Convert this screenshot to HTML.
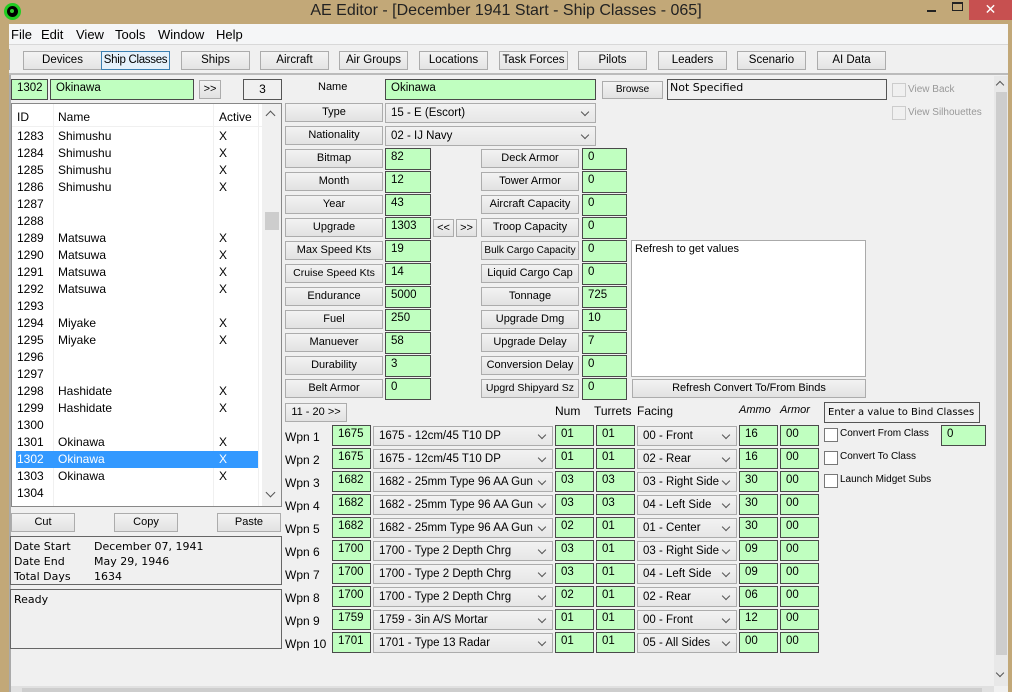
<!DOCTYPE html>
<html><head><meta charset="utf-8"><style>
*{box-sizing:border-box;margin:0;padding:0}
body{width:1012px;height:692px;overflow:hidden;background:#f0f0f0;font-family:"Liberation Sans",sans-serif;font-size:12px;color:#000;position:relative}
div,span{position:absolute}
.g{background:#c0ffc0;border:1px solid #4a4a4a;padding-left:5px;line-height:16px;font-size:11.5px;white-space:nowrap}
.b{background:linear-gradient(#f3f3f3,#e2e2e2);border:1px solid #acacac;text-align:center;font-size:11px;white-space:nowrap}
.tb{background:linear-gradient(#f3f3f3,#e4e4e4);border:1px solid #acacac;text-align:center;font-size:11.5px;height:19px;line-height:17px;top:51px;width:69px;white-space:nowrap}
.s{background:linear-gradient(#f2f2f2,#e6e6e6);border:1px solid #acacac;padding-left:5px;font-size:11.5px;line-height:18px;white-space:nowrap}
.s:after{content:"";position:absolute;right:7px;top:5px;width:5px;height:5px;border-right:1.5px solid #555;border-bottom:1.5px solid #555;transform:rotate(45deg)}
.l{font-size:12px;white-space:nowrap}
.cb{width:14px;height:14px;border:1px solid #777;background:#fff}
</style></head><body>
<div style="left:0;top:0;width:1012px;height:24px;background:#c2a878"></div>
<div style="left:0;top:0;width:9px;height:692px;background:#c2a878"></div>
<div style="left:1008px;top:0;width:4px;height:692px;background:#c2a878"></div>
<div style="left:4px;top:3px;width:17px;height:17px;border-radius:50%;background:#000;border:3px solid #22cc22"></div>
<div style="left:10px;top:9px;width:4px;height:4px;border-radius:50%;background:#3c3"></div>
<div style="left:0;top:2px;width:1012px;text-align:center;font-size:16px;color:#222">AE Editor - [December 1941 Start - Ship Classes - 065]</div>
<div style="left:927px;top:10px;width:9px;height:2px;background:#222"></div>
<div style="left:952px;top:2px;width:11px;height:9px;border:1.5px solid #222;border-top-width:2px"></div>
<div style="left:969px;top:0;width:43px;height:20px;background:#c75050;color:#fff;text-align:center;font-size:14px;line-height:19px">✕</div>
<div style="left:9px;top:24px;width:999px;height:21px;background:#f5f6f7;border-bottom:1px solid #d8d8d8"></div>
<div class="l" style="left:11px;top:27px;font-size:13px">File</div>
<div class="l" style="left:41px;top:27px;font-size:13px">Edit</div>
<div class="l" style="left:76px;top:27px;font-size:13px">View</div>
<div class="l" style="left:115px;top:27px;font-size:13px">Tools</div>
<div class="l" style="left:158px;top:27px;font-size:13px">Window</div>
<div class="l" style="left:216px;top:27px;font-size:13px">Help</div>
<div style="left:9px;top:49px;width:1px;height:21px;background:#aaa"></div>
<div class="tb" style="left:23px;width:79px">Devices</div>
<div class="tb" style="left:101px;width:69px;border-color:#3c7fb1;background:#e5f1fb;letter-spacing:-0.3px">Ship Classes</div>
<div class="tb" style="left:181px">Ships</div>
<div class="tb" style="left:260px">Aircraft</div>
<div class="tb" style="left:339px">Air Groups</div>
<div class="tb" style="left:419px">Locations</div>
<div class="tb" style="left:499px">Task Forces</div>
<div class="tb" style="left:578px">Pilots</div>
<div class="tb" style="left:658px">Leaders</div>
<div class="tb" style="left:737px">Scenario</div>
<div class="tb" style="left:817px">AI Data</div>
<div style="left:9px;top:73px;width:999px;height:2px;background:#bbb"></div>
<div style="left:9px;top:75px;width:2px;height:617px;background:#aaa"></div>
<div class="g" style="left:11px;top:79px;width:37px;height:21px">1302</div>
<div class="g" style="left:50px;top:79px;width:144px;height:21px">Okinawa</div>
<div class="b" style="left:199px;top:80px;width:22px;height:19px;line-height:17px">&gt;&gt;</div>
<div style="left:243px;top:79px;width:39px;height:21px;border:1px solid #555;text-align:center;line-height:19px">3</div>
<div style="left:11px;top:103px;width:271px;height:404px;background:#fff;border:1px solid #888;overflow:hidden">
 <div style="left:41px;top:0;width:1px;height:404px;background:#f0f0f0"></div>
 <div style="left:201px;top:0;width:1px;height:404px;background:#f0f0f0"></div>
 <div style="left:246px;top:0;width:1px;height:404px;background:#f0f0f0"></div>
 <div style="left:5px;top:6px">ID</div><div style="left:46px;top:6px">Name</div><div style="left:207px;top:6px">Active</div>
 <div style="left:0;top:22px;width:250px;height:1px;background:#f0f0f0"></div>
 <div style="left:250px;top:0;width:19px;height:402px;background:#f0f0f0"></div>
 <div style="left:253px;top:108px;width:14px;height:18px;background:#cdcdcd"></div>
 <div style="left:255px;top:8px;width:7px;height:7px;border-left:1.5px solid #555;border-top:1.5px solid #555;transform:rotate(45deg)"></div>
 <div style="left:255px;top:385px;width:7px;height:7px;border-right:1.5px solid #555;border-bottom:1.5px solid #555;transform:rotate(45deg)"></div>
</div>
<div style="left:16px;top:451px;width:242px;height:17px;background:#3399ff"></div>
<div style="left:17px;top:128px;line-height:17px">1283<br>1284<br>1285<br>1286<br>1287<br>1288<br>1289<br>1290<br>1291<br>1292<br>1293<br>1294<br>1295<br>1296<br>1297<br>1298<br>1299<br>1300<br>1301<br><span style="position:static;color:#fff">1302</span><br>1303<br>1304</div>
<div style="left:58px;top:128px;line-height:17px">Shimushu<br>Shimushu<br>Shimushu<br>Shimushu<br>&nbsp;<br>&nbsp;<br>Matsuwa<br>Matsuwa<br>Matsuwa<br>Matsuwa<br>&nbsp;<br>Miyake<br>Miyake<br>&nbsp;<br>&nbsp;<br>Hashidate<br>Hashidate<br>&nbsp;<br>Okinawa<br><span style="position:static;color:#fff">Okinawa</span><br>Okinawa<br>&nbsp;</div>
<div style="left:219px;top:128px;line-height:17px">X<br>X<br>X<br>X<br>&nbsp;<br>&nbsp;<br>X<br>X<br>X<br>X<br>&nbsp;<br>X<br>X<br>&nbsp;<br>&nbsp;<br>X<br>X<br>&nbsp;<br>X<br><span style="position:static;color:#fff">X</span><br>X<br>&nbsp;</div>
<div class="b" style="left:11px;top:513px;width:64px;height:19px;line-height:17px">Cut</div>
<div class="b" style="left:114px;top:513px;width:64px;height:19px;line-height:17px">Copy</div>
<div class="b" style="left:217px;top:513px;width:64px;height:19px;line-height:17px">Paste</div>
<div style="left:10px;top:536px;width:272px;height:49px;border:1px solid #666;font-family:'DejaVu Sans',sans-serif;font-size:11px;line-height:15px">
 <div style="left:3px;top:2px">Date Start<br>Date End<br>Total Days</div>
 <div style="left:83px;top:2px">December 07, 1941<br>May 29, 1946<br>1634</div>
</div>
<div style="left:10px;top:589px;width:272px;height:60px;border:1px solid #666;font-family:'DejaVu Sans',sans-serif;font-size:11px"><div style="left:3px;top:3px">Ready</div></div>
<div class="l" style="left:318px;top:81px;font-size:11px">Name</div>
<div class="g" style="left:385px;top:79px;width:211px;height:21px">Okinawa</div>
<div class="b" style="left:602px;top:81px;width:61px;height:18px;line-height:16px;font-size:10px">Browse</div>
<div style="left:667px;top:79px;width:220px;height:21px;border:1px solid #555;padding-left:2px;font-family:'DejaVu Sans',sans-serif;font-size:11px;line-height:16px">Not Specified</div>
<div class="cb" style="left:892px;top:83px;border-color:#ccc;background:#f0f0f0"></div><div class="l" style="left:908px;top:84px;font-size:10px;color:#999">View Back</div>
<div class="cb" style="left:892px;top:106px;border-color:#ccc;background:#f0f0f0"></div><div class="l" style="left:908px;top:107px;font-size:10px;color:#999">View Silhouettes</div>
<div class="s" style="left:385px;top:103px;width:211px;height:20px">15 - E (Escort)</div>
<div class="s" style="left:385px;top:126px;width:211px;height:20px">02 - IJ Navy</div>
<div class="b" style="left:285px;top:103px;width:98px;height:19px;line-height:17px">Type</div>
<div class="b" style="left:285px;top:126px;width:98px;height:19px;line-height:17px">Nationality</div>
<div class="b" style="left:285px;top:149px;width:98px;height:19px;line-height:17px">Bitmap</div>
<div class="b" style="left:285px;top:172px;width:98px;height:19px;line-height:17px">Month</div>
<div class="b" style="left:285px;top:195px;width:98px;height:19px;line-height:17px">Year</div>
<div class="b" style="left:285px;top:218px;width:98px;height:19px;line-height:17px">Upgrade</div>
<div class="b" style="left:285px;top:241px;width:98px;height:19px;line-height:17px">Max Speed Kts</div>
<div class="b" style="left:285px;top:264px;width:98px;height:19px;line-height:17px;font-size:10.5px">Cruise Speed Kts</div>
<div class="b" style="left:285px;top:287px;width:98px;height:19px;line-height:17px">Endurance</div>
<div class="b" style="left:285px;top:310px;width:98px;height:19px;line-height:17px">Fuel</div>
<div class="b" style="left:285px;top:333px;width:98px;height:19px;line-height:17px">Manuever</div>
<div class="b" style="left:285px;top:356px;width:98px;height:19px;line-height:17px">Durability</div>
<div class="b" style="left:285px;top:379px;width:98px;height:19px;line-height:17px">Belt Armor</div>
<div class="g" style="left:385px;top:148px;width:46px;height:22px">82</div>
<div class="g" style="left:385px;top:171px;width:46px;height:22px">12</div>
<div class="g" style="left:385px;top:194px;width:46px;height:22px">43</div>
<div class="g" style="left:385px;top:217px;width:46px;height:22px">1303</div>
<div class="g" style="left:385px;top:240px;width:46px;height:22px">19</div>
<div class="g" style="left:385px;top:263px;width:46px;height:22px">14</div>
<div class="g" style="left:385px;top:286px;width:46px;height:22px">5000</div>
<div class="g" style="left:385px;top:309px;width:46px;height:22px">250</div>
<div class="g" style="left:385px;top:332px;width:46px;height:22px">58</div>
<div class="g" style="left:385px;top:355px;width:46px;height:22px">3</div>
<div class="g" style="left:385px;top:378px;width:46px;height:22px">0</div>
<div class="b" style="left:433px;top:219px;width:21px;height:18px;line-height:16px">&lt;&lt;</div>
<div class="b" style="left:456px;top:219px;width:21px;height:18px;line-height:16px">&gt;&gt;</div>
<div class="b" style="left:481px;top:149px;width:98px;height:19px;line-height:17px">Deck Armor</div>
<div class="b" style="left:481px;top:172px;width:98px;height:19px;line-height:17px">Tower Armor</div>
<div class="b" style="left:481px;top:195px;width:98px;height:19px;line-height:17px">Aircraft Capacity</div>
<div class="b" style="left:481px;top:218px;width:98px;height:19px;line-height:17px">Troop Capacity</div>
<div class="b" style="left:481px;top:241px;width:98px;height:19px;line-height:17px;font-size:10px">Bulk Cargo Capacity</div>
<div class="b" style="left:481px;top:264px;width:98px;height:19px;line-height:17px">Liquid Cargo Cap</div>
<div class="b" style="left:481px;top:287px;width:98px;height:19px;line-height:17px">Tonnage</div>
<div class="b" style="left:481px;top:310px;width:98px;height:19px;line-height:17px">Upgrade Dmg</div>
<div class="b" style="left:481px;top:333px;width:98px;height:19px;line-height:17px">Upgrade Delay</div>
<div class="b" style="left:481px;top:356px;width:98px;height:19px;line-height:17px">Conversion Delay</div>
<div class="b" style="left:481px;top:379px;width:98px;height:19px;line-height:17px;font-size:10.5px">Upgrd Shipyard Sz</div>
<div class="g" style="left:582px;top:148px;width:45px;height:22px">0</div>
<div class="g" style="left:582px;top:171px;width:45px;height:22px">0</div>
<div class="g" style="left:582px;top:194px;width:45px;height:22px">0</div>
<div class="g" style="left:582px;top:217px;width:45px;height:22px">0</div>
<div class="g" style="left:582px;top:240px;width:45px;height:22px">0</div>
<div class="g" style="left:582px;top:263px;width:45px;height:22px">0</div>
<div class="g" style="left:582px;top:286px;width:45px;height:22px">725</div>
<div class="g" style="left:582px;top:309px;width:45px;height:22px">10</div>
<div class="g" style="left:582px;top:332px;width:45px;height:22px">7</div>
<div class="g" style="left:582px;top:355px;width:45px;height:22px">0</div>
<div class="g" style="left:582px;top:378px;width:45px;height:22px">0</div>
<div style="left:631px;top:240px;width:235px;height:137px;background:#fff;border:1px solid #aaa;padding:2px 3px;font-size:11px">Refresh to get values</div>
<div class="b" style="left:632px;top:379px;width:234px;height:19px;line-height:17px">Refresh Convert To/From Binds</div>
<div class="b" style="left:285px;top:403px;width:62px;height:19px;line-height:17px">11 - 20 &gt;&gt;</div>
<div class="l" style="left:555px;top:404px">Num</div>
<div class="l" style="left:594px;top:404px">Turrets</div>
<div class="l" style="left:637px;top:404px">Facing</div>
<div class="l" style="left:739px;top:404px;font-style:italic;font-size:11px">Ammo</div>
<div class="l" style="left:780px;top:404px;font-style:italic;font-size:11px">Armor</div>
<div style="left:824px;top:402px;width:156px;height:21px;border:1px solid #555;font-family:'DejaVu Sans',sans-serif;font-size:10px;line-height:19px;padding-left:3px;white-space:nowrap;overflow:hidden">Enter a value to Bind Classes</div>
<div class="cb" style="left:824px;top:428px"></div><div class="l" style="left:840px;top:428px;font-size:10px">Convert From Class</div>
<div class="g" style="left:941px;top:425px;width:45px;height:21px">0</div>
<div class="cb" style="left:824px;top:451px"></div><div class="l" style="left:840px;top:451px;font-size:10px">Convert To Class</div>
<div class="cb" style="left:824px;top:474px"></div><div class="l" style="left:840px;top:474px;font-size:10px">Launch Midget Subs</div>

<div class="l" style="left:285px;top:430px">Wpn 1</div>
<div class="g" style="left:332px;top:425px;width:39px;height:21px">1675</div><div class="s" style="left:373px;top:426px;width:180px;height:20px">1675 - 12cm/45 T10 DP</div><div class="g" style="left:555px;top:425px;width:39px;height:21px">01</div><div class="g" style="left:596px;top:425px;width:39px;height:21px">01</div><div class="s" style="left:637px;top:426px;width:100px;height:20px">00 - Front</div><div class="g" style="left:739px;top:425px;width:39px;height:21px">16</div><div class="g" style="left:780px;top:425px;width:39px;height:21px">00</div>
<div class="l" style="left:285px;top:453px">Wpn 2</div>
<div class="g" style="left:332px;top:448px;width:39px;height:21px">1675</div><div class="s" style="left:373px;top:449px;width:180px;height:20px">1675 - 12cm/45 T10 DP</div><div class="g" style="left:555px;top:448px;width:39px;height:21px">01</div><div class="g" style="left:596px;top:448px;width:39px;height:21px">01</div><div class="s" style="left:637px;top:449px;width:100px;height:20px">02 - Rear</div><div class="g" style="left:739px;top:448px;width:39px;height:21px">16</div><div class="g" style="left:780px;top:448px;width:39px;height:21px">00</div>
<div class="l" style="left:285px;top:476px">Wpn 3</div>
<div class="g" style="left:332px;top:471px;width:39px;height:21px">1682</div><div class="s" style="left:373px;top:472px;width:180px;height:20px">1682 - 25mm Type 96 AA Gun</div><div class="g" style="left:555px;top:471px;width:39px;height:21px">03</div><div class="g" style="left:596px;top:471px;width:39px;height:21px">03</div><div class="s" style="left:637px;top:472px;width:100px;height:20px">03 - Right Side</div><div class="g" style="left:739px;top:471px;width:39px;height:21px">30</div><div class="g" style="left:780px;top:471px;width:39px;height:21px">00</div>
<div class="l" style="left:285px;top:499px">Wpn 4</div>
<div class="g" style="left:332px;top:494px;width:39px;height:21px">1682</div><div class="s" style="left:373px;top:495px;width:180px;height:20px">1682 - 25mm Type 96 AA Gun</div><div class="g" style="left:555px;top:494px;width:39px;height:21px">03</div><div class="g" style="left:596px;top:494px;width:39px;height:21px">03</div><div class="s" style="left:637px;top:495px;width:100px;height:20px">04 - Left Side</div><div class="g" style="left:739px;top:494px;width:39px;height:21px">30</div><div class="g" style="left:780px;top:494px;width:39px;height:21px">00</div>
<div class="l" style="left:285px;top:522px">Wpn 5</div>
<div class="g" style="left:332px;top:517px;width:39px;height:21px">1682</div><div class="s" style="left:373px;top:518px;width:180px;height:20px">1682 - 25mm Type 96 AA Gun</div><div class="g" style="left:555px;top:517px;width:39px;height:21px">02</div><div class="g" style="left:596px;top:517px;width:39px;height:21px">01</div><div class="s" style="left:637px;top:518px;width:100px;height:20px">01 - Center</div><div class="g" style="left:739px;top:517px;width:39px;height:21px">30</div><div class="g" style="left:780px;top:517px;width:39px;height:21px">00</div>
<div class="l" style="left:285px;top:545px">Wpn 6</div>
<div class="g" style="left:332px;top:540px;width:39px;height:21px">1700</div><div class="s" style="left:373px;top:541px;width:180px;height:20px">1700 - Type 2 Depth Chrg</div><div class="g" style="left:555px;top:540px;width:39px;height:21px">03</div><div class="g" style="left:596px;top:540px;width:39px;height:21px">01</div><div class="s" style="left:637px;top:541px;width:100px;height:20px">03 - Right Side</div><div class="g" style="left:739px;top:540px;width:39px;height:21px">09</div><div class="g" style="left:780px;top:540px;width:39px;height:21px">00</div>
<div class="l" style="left:285px;top:568px">Wpn 7</div>
<div class="g" style="left:332px;top:563px;width:39px;height:21px">1700</div><div class="s" style="left:373px;top:564px;width:180px;height:20px">1700 - Type 2 Depth Chrg</div><div class="g" style="left:555px;top:563px;width:39px;height:21px">03</div><div class="g" style="left:596px;top:563px;width:39px;height:21px">01</div><div class="s" style="left:637px;top:564px;width:100px;height:20px">04 - Left Side</div><div class="g" style="left:739px;top:563px;width:39px;height:21px">09</div><div class="g" style="left:780px;top:563px;width:39px;height:21px">00</div>
<div class="l" style="left:285px;top:591px">Wpn 8</div>
<div class="g" style="left:332px;top:586px;width:39px;height:21px">1700</div><div class="s" style="left:373px;top:587px;width:180px;height:20px">1700 - Type 2 Depth Chrg</div><div class="g" style="left:555px;top:586px;width:39px;height:21px">02</div><div class="g" style="left:596px;top:586px;width:39px;height:21px">01</div><div class="s" style="left:637px;top:587px;width:100px;height:20px">02 - Rear</div><div class="g" style="left:739px;top:586px;width:39px;height:21px">06</div><div class="g" style="left:780px;top:586px;width:39px;height:21px">00</div>
<div class="l" style="left:285px;top:614px">Wpn 9</div>
<div class="g" style="left:332px;top:609px;width:39px;height:21px">1759</div><div class="s" style="left:373px;top:610px;width:180px;height:20px">1759 - 3in A/S Mortar</div><div class="g" style="left:555px;top:609px;width:39px;height:21px">01</div><div class="g" style="left:596px;top:609px;width:39px;height:21px">01</div><div class="s" style="left:637px;top:610px;width:100px;height:20px">00 - Front</div><div class="g" style="left:739px;top:609px;width:39px;height:21px">12</div><div class="g" style="left:780px;top:609px;width:39px;height:21px">00</div>
<div class="l" style="left:285px;top:637px">Wpn 10</div>
<div class="g" style="left:332px;top:632px;width:39px;height:21px">1701</div><div class="s" style="left:373px;top:633px;width:180px;height:20px">1701 - Type 13 Radar</div><div class="g" style="left:555px;top:632px;width:39px;height:21px">01</div><div class="g" style="left:596px;top:632px;width:39px;height:21px">01</div><div class="s" style="left:637px;top:633px;width:100px;height:20px">05 - All Sides</div><div class="g" style="left:739px;top:632px;width:39px;height:21px">00</div><div class="g" style="left:780px;top:632px;width:39px;height:21px">00</div>

<div style="left:994px;top:76px;width:14px;height:610px;background:#e8e8e8"></div>
<div style="left:996px;top:92px;width:11px;height:563px;background:#cdcdcd"></div>
<div style="left:997px;top:82px;width:6px;height:6px;border-left:1.5px solid #555;border-top:1.5px solid #555;transform:rotate(45deg)"></div>
<div style="left:997px;top:670px;width:6px;height:6px;border-right:1.5px solid #555;border-bottom:1.5px solid #555;transform:rotate(45deg)"></div>
<div style="left:11px;top:686px;width:983px;height:6px;background:#e0e0e0"></div>
<div style="left:22px;top:688px;width:960px;height:4px;background:#cdcdcd"></div>
</body></html>
